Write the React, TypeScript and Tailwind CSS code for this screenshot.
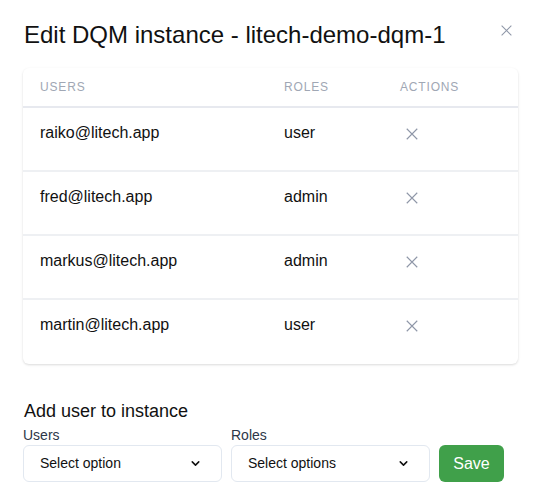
import { ChevronDown } from "lucide-react";

const rows = [
  { email: "raiko@litech.app", role: "user" },
  { email: "fred@litech.app", role: "admin" },
  { email: "markus@litech.app", role: "admin" },
  { email: "martin@litech.app", role: "user" },
];

function XIcon({ className }: { className?: string }) {
  return (
    <svg viewBox="0 0 16 16" className={className} fill="none" stroke="currentColor" strokeWidth="1.3">
      <path d="M2 2 L14 14 M14 2 L2 14" />
    </svg>
  );
}

export default function App() {
  return (
    <div className="w-[539px] h-[503px] bg-white font-['Liberation_Sans',Arial,sans-serif] text-[#1a202c] relative overflow-hidden">
      <button type="button" className="absolute left-[500px] top-[24px] text-[#8f97a8]">
        <XIcon className="w-[13px] h-[13px]" />
      </button>

      <div className="px-6 pt-[19px]">
        <h1 className="text-[24px] leading-[32px] text-[#111]">Edit DQM instance - litech-demo-dqm-1</h1>

        {/* tabla */}
        <div className="mt-[17px] w-[495px] -ml-px rounded-md bg-white shadow-[0_1px_3px_rgba(0,0,0,0.1),0_1px_2px_rgba(0,0,0,0.05)]">
          <div className="flex h-[40px] items-center border-b-2 border-[#e7e9ef] text-[12px] tracking-[0.07em] text-[#a0a7b4]">
            <div className="w-[261px] pl-[17px]">USERS</div>
            <div className="w-[116px]">ROLES</div>
            <div>ACTIONS</div>
          </div>
          {rows.map((r, i) => (
            <div
              key={r.email}
              className={`flex h-[64px] pt-[13px] text-[16px] leading-[24px] text-[#111] ${i < rows.length - 1 ? "border-b-2 border-[#eef0f3]" : ""}`}
            >
              <div className="w-[261px] pl-[17px]">{r.email}</div>
              <div className="w-[116px]">{r.role}</div>
              <div className="pl-[5px] pt-[6px] text-[#8f97a8]">
                <XIcon className="w-[14px] h-[14px]" />
              </div>
            </div>
          ))}
        </div>

        <h2 className="mt-[35px] text-[18px] leading-[24px] text-[#111]">Add user to instance</h2>
        <div className="mt-[2px] flex items-end gap-[9px] -ml-px">
          <div>
            <label className="block text-[14px] leading-[20px] text-[#2d3748]">Users</label>
            <div className="flex h-[37px] w-[199px] items-center justify-between rounded-md border border-[#e2e8f0] pl-[16px] pr-[19px] text-[14px] text-[#111]">
              <span>Select option</span>
              <ChevronDown className="w-[13px] h-[13px]" strokeWidth={2.8} />
            </div>
          </div>
          <div>
            <label className="block text-[14px] leading-[20px] text-[#2d3748]">Roles</label>
            <div className="flex h-[37px] w-[199px] items-center justify-between rounded-md border border-[#e2e8f0] pl-[16px] pr-[19px] text-[14px] text-[#111]">
              <span>Select options</span>
              <ChevronDown className="w-[13px] h-[13px]" strokeWidth={2.8} />
            </div>
          </div>
          <button type="button" className="h-[37px] w-[65px] rounded-md bg-[#40a04a] text-[16px] text-white">
            Save
          </button>
        </div>
      </div>
    </div>
  );
}
